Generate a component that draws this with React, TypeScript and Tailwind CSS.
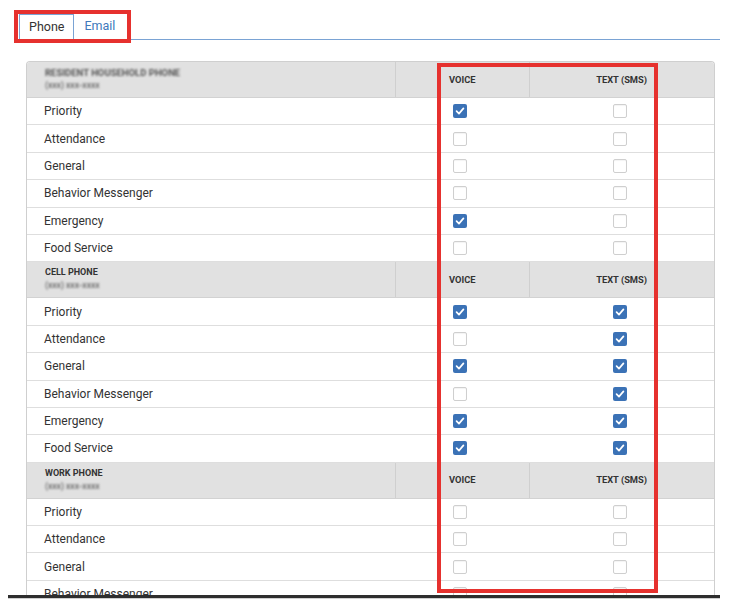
import React from 'react';

type Row = { label: string; voice: boolean; sms: boolean };
type Group = { title: string; blurTitle?: boolean; number: string; rows: Row[] };

const labels = ['Priority', 'Attendance', 'General', 'Behavior Messenger', 'Emergency', 'Food Service'];

const mk = (v: boolean[], s: boolean[]): Row[] => labels.map((l, i) => ({ label: l, voice: v[i], sms: s[i] }));

const groups: Group[] = [
  {
    title: 'RESIDENT HOUSEHOLD PHONE',
    blurTitle: true,
    number: '(xxx) xxx-xxxx',
    rows: mk([true, false, false, false, true, false], [false, false, false, false, false, false]),
  },
  {
    title: 'CELL PHONE',
    number: '(xxx) xxx-xxxx',
    rows: mk([true, false, true, false, true, true], [true, true, true, true, true, true]),
  },
  {
    title: 'WORK PHONE',
    number: '(xxx) xxx-xxxx',
    rows: mk([false, false, false, false, false, false], [false, false, false, false, false, false]),
  },
];

function Check({ on }: { on: boolean }) {
  if (on) {
    return (
      <span className="flex h-[14px] w-[14px] items-center justify-center rounded-[2px] bg-[#3b72b6]">
        <svg viewBox="0 0 14 14" className="h-[12px] w-[12px]">
          <path d="M3 7.2 L5.8 10 L11 4" fill="none" stroke="white" strokeWidth="2" strokeLinecap="round" strokeLinejoin="round" />
        </svg>
      </span>
    );
  }
  return <span className="block h-[14px] w-[14px] rounded-[2px] border border-[#cfcfcf] bg-white shadow-[inset_0_1px_1px_rgba(0,0,0,0.05)]" />;
}

function Header({ g }: { g: Group }) {
  return (
    <div className="grid h-[36px] grid-cols-[368px_134px_1fr] border-b border-[#d2d2d2] bg-[#e1e1e1]">
      <div className="flex flex-col justify-center pl-[18px] pb-[1px] leading-[13px]">
        {g.blurTitle ? (
          <span className="text-[9.5px] font-bold text-[#555] blur-[1.3px]">{g.title}</span>
        ) : (
          <span className="text-[9px] font-bold text-[#333]">{g.title}</span>
        )}
        <span className="text-[8.5px] font-bold text-[#777] blur-[1.3px]">{g.number}</span>
      </div>
      <div className="flex items-center border-l border-[#cfcfcf] pl-[53px] text-[9.3px] font-bold text-[#333]">VOICE</div>
      <div className="flex items-center justify-end border-l border-[#cfcfcf] pr-[67px] text-[9.3px] font-bold text-[#333]">TEXT (SMS)</div>
    </div>
  );
}

export default function App() {
  return (
    <div className="relative h-[610px] w-[732px] bg-white font-['Roboto',sans-serif]">
      <div className="ml-[8px] mr-[12px] h-[598px] overflow-hidden border-b-[3px] border-[#2e2e2e] shadow-[0_1px_0_#cfcfcf]">
        <div className="ml-[11px] flex h-[40px] items-end border-b border-[#7aa3d4] pt-[14px]">
          <div className="-mb-px flex h-[26px] items-center border border-b-white border-[#7aa3d4] bg-white px-[9px] text-[12.5px] text-[#333]">Phone</div>
          <div className="flex h-[25px] items-center px-[10px] text-[12.5px] text-[#4079bb]">Email</div>
        </div>

        <div className="ml-[18px] mr-[5px] mt-[21px] overflow-hidden rounded-t-[4px] border-x border-t border-[#cfcfcf]">
          {groups.map((g) => (
            <div key={g.title}>
              <Header g={g} />
              {g.rows.map((r) => (
                <div key={r.label} className="grid h-[27.4px] grid-cols-[368px_134px_1fr] border-b border-[#dedede] bg-white">
                  <div className="flex items-center pl-[17px] text-[12px] text-[#333]">{r.label}</div>
                  <div className="flex items-center pl-[58px]">
                    <Check on={r.voice} />
                  </div>
                  <div className="flex items-center pl-[84px]">
                    <Check on={r.sms} />
                  </div>
                </div>
              ))}
            </div>
          ))}
        </div>
      </div>

      <div className="pointer-events-none absolute left-[14px] top-[10px] h-[33px] w-[117px] border-[4px] border-[#e6312e]" />
      <div className="pointer-events-none absolute left-[437px] top-[63px] h-[530px] w-[221px] border-[4px] border-[#e6312e]" />
    </div>
  );
}
